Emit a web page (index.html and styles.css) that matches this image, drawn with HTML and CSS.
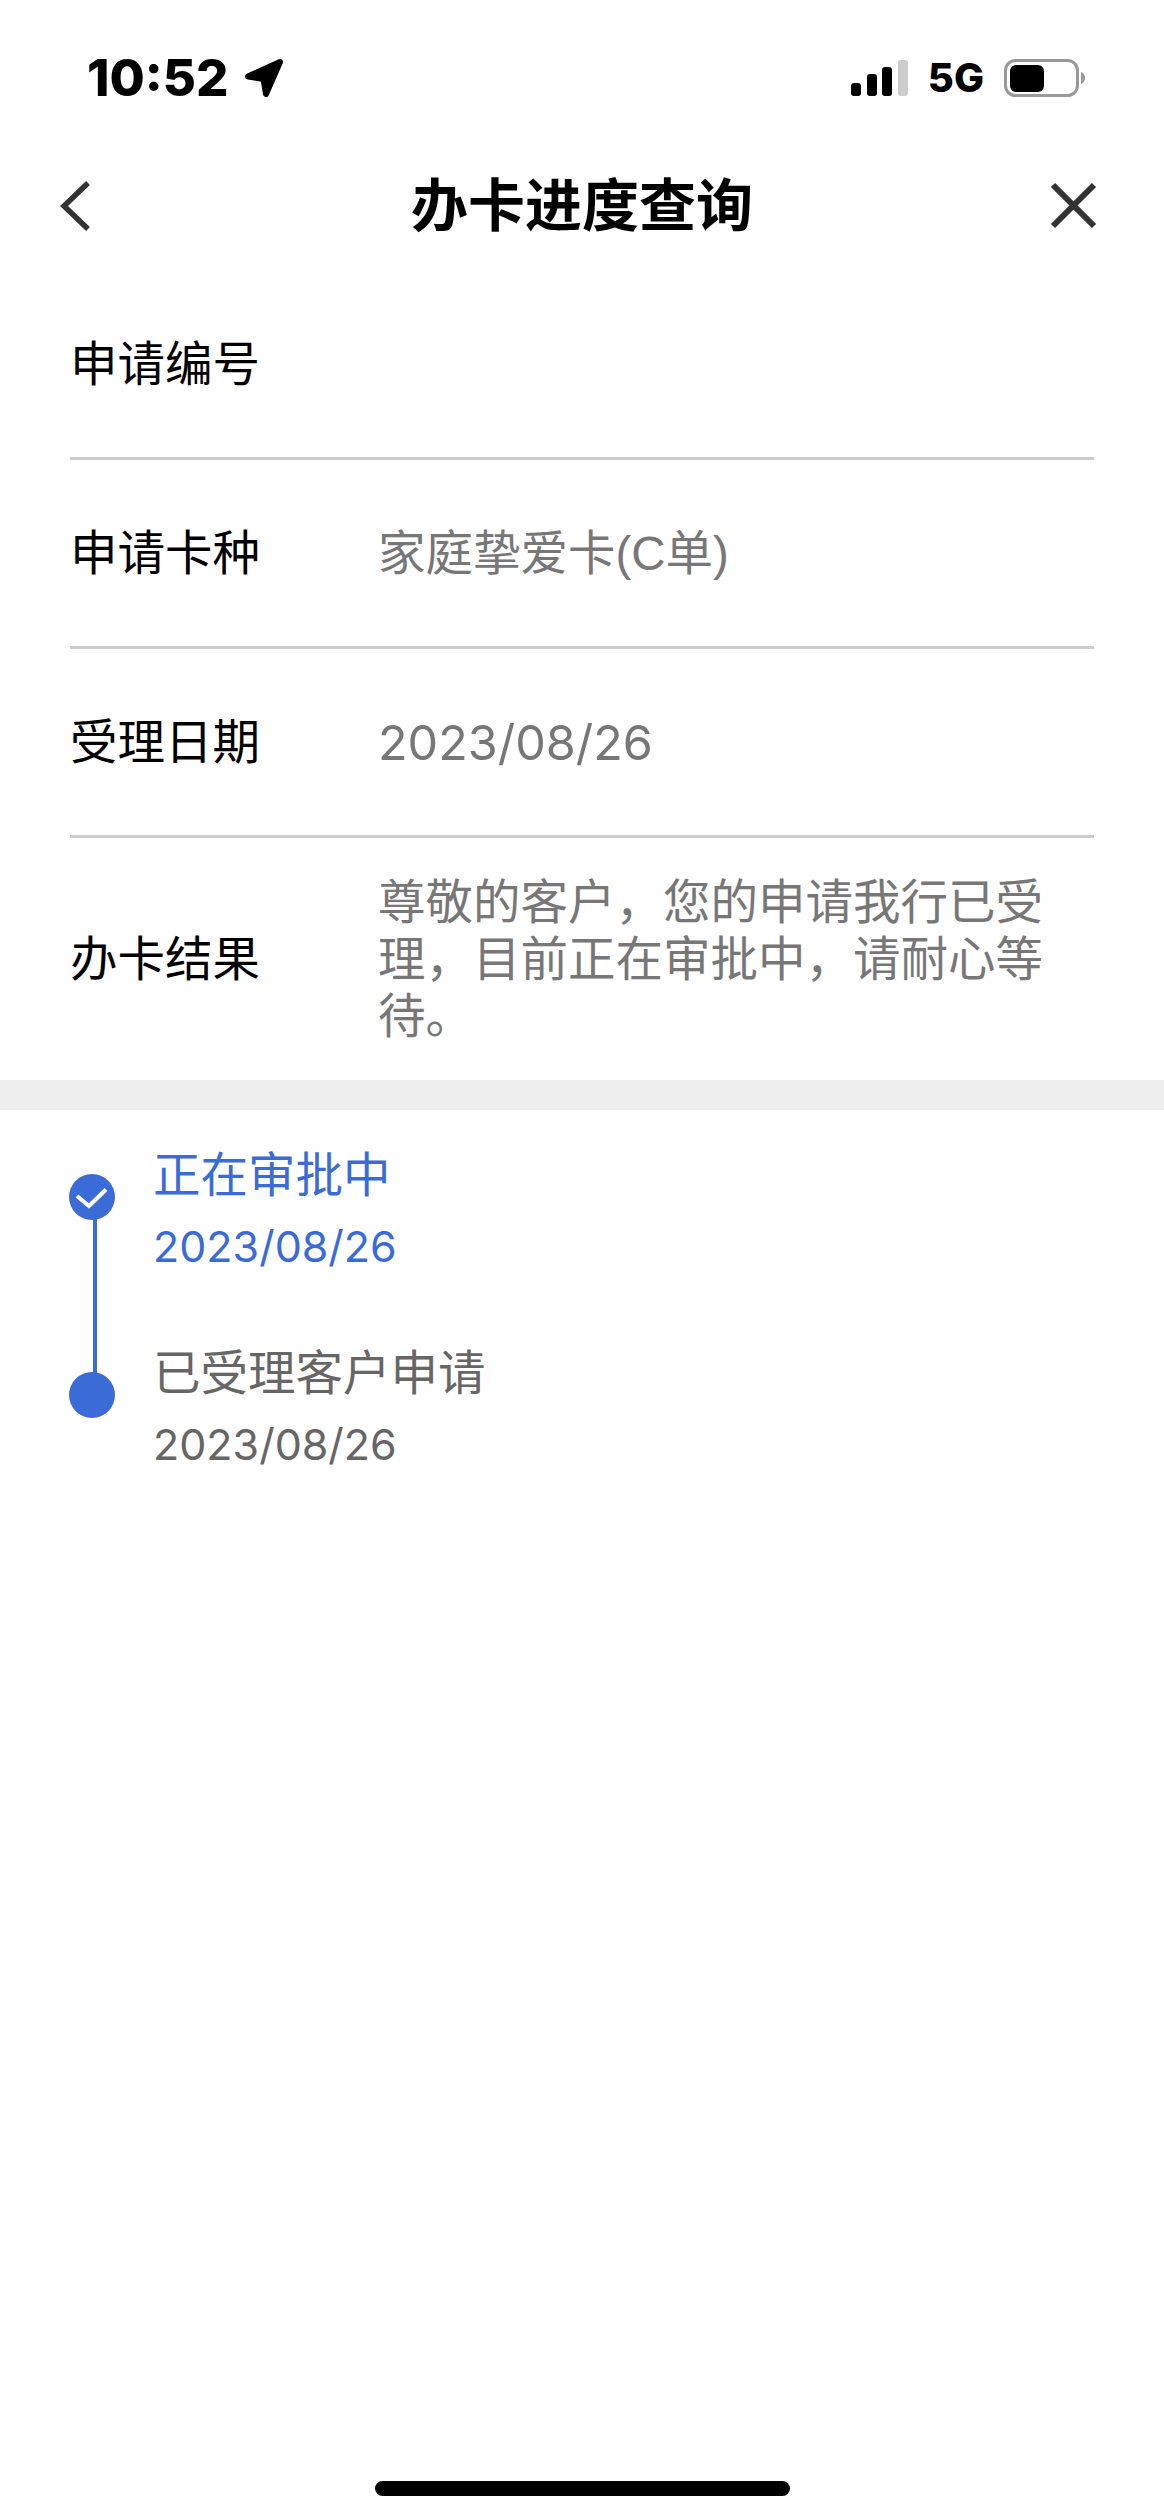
FILE: index.html
```html
<!DOCTYPE html>
<html lang="zh-CN">
<head>
    <meta charset="UTF-8">
    <title>办卡进度查询</title>
    <link rel="stylesheet" href="styles.css">
</head>
<body>
    <!-- Status bar -->
    <div class="status-bar">
        <div class="status-left">
            <span class="time">10:52</span>
            <svg class="location" width="40" height="40" viewBox="0 0 40 40"><path d="M4 18.500 36 4 22 36 19.500 21z" fill="#000" stroke="#000" stroke-width="6" stroke-linejoin="round"/></svg>
        </div>
        <div class="status-right">
            <svg class="signal" width="57" height="36" viewBox="0 0 57 36">
                <rect x="0" y="23" width="10" height="13" rx="3" fill="#000"/>
                <rect x="16" y="14" width="10" height="22" rx="3" fill="#000"/>
                <rect x="31" y="7" width="10" height="29" rx="3" fill="#000"/>
                <rect x="47" y="0" width="10" height="36" rx="3" fill="#ccc"/>
            </svg>
            <span class="network">5G</span>
            <svg class="battery" width="81" height="38" viewBox="0 0 81 38">
                <rect x="1.500" y="1.500" width="72" height="35" rx="10" fill="none" stroke="#999" stroke-width="3"/>
                <rect x="6" y="6" width="34" height="27" rx="6" fill="#000"/>
                <path d="M77 13c3 1 4 3.500 4 6s-1 5-4 6z" fill="#999"/>
            </svg>
        </div>
    </div>

    <!-- Nav -->
    <div class="nav-bar">
        <svg class="nav-back" width="40" height="56" viewBox="0 0 40 56"><path d="M28 5 4 28l24 23" fill="none" stroke="#333" stroke-width="5.500"/></svg>
        <div class="nav-title">办卡进度查询</div>
        <svg class="nav-close" width="56" height="56" viewBox="0 0 56 56"><path d="M5 7l41 41M46 7 5 48" fill="none" stroke="#333" stroke-width="6"/></svg>
    </div>

    <!-- Info rows -->
    <div class="info-list">
        <div class="info-row">
            <div class="info-label">申请编号</div>
            <div class="info-value"></div>
        </div>
        <div class="info-row">
            <div class="info-label">申请卡种</div>
            <div class="info-value">家庭挚爱卡(C单)</div>
        </div>
        <div class="info-row">
            <div class="info-label">受理日期</div>
            <div class="info-value info-date">2023/08/26</div>
        </div>
        <div class="info-row info-row-last">
            <div class="info-label">办卡结果</div>
            <div class="info-value">尊敬的客户，您的申请我行已受理，目前正在审批中，请耐心等待。</div>
        </div>
    </div>

    <div class="band"></div>

    <!-- Timeline -->
    <div class="timeline">
        <div class="step step-active">
            <div class="step-mark">
                <svg class="dot" width="46" height="46" viewBox="0 0 46 46"><circle cx="23" cy="23" r="23" fill="#3a6bd6"/><path d="M8 22 20 32 37 15.500" fill="none" stroke="#fff" stroke-width="4"/></svg>
            </div>
            <div class="step-body">
                <div class="step-title">正在审批中</div>
                <div class="step-date">2023/08/26</div>
            </div>
        </div>
        <div class="step">
            <div class="step-mark">
                <svg class="dot" width="46" height="46" viewBox="0 0 46 46"><circle cx="23" cy="23" r="23" fill="#3a6bd6"/></svg>
            </div>
            <div class="step-body">
                <div class="step-title">已受理客户申请</div>
                <div class="step-date">2023/08/26</div>
            </div>
        </div>
    </div>

    <div class="home-indicator"></div>
</body>
</html>
```

FILE: styles.css
```css
html, body {
    margin: 0;
    padding: 0;
}
body {
    width: 1164px;
    height: 2520px;
    background: #fff;
    overflow: hidden;
    display: flex;
    flex-direction: column;
    font-family: "Liberation Sans", "Noto Sans CJK SC", sans-serif;
    color: #000;
}
.status-bar {
    height: 108px;
    padding: 48px 79px 0 87px;
    box-sizing: border-box;
    display: flex;
    justify-content: space-between;
    align-items: center;
}
.status-left {
    display: flex;
    align-items: center;
    gap: 15px;
}
.time {
    font-family: Inter, sans-serif;
    font-size: 51px;
    font-weight: 800;
    line-height: 60px;
}
.status-right {
    display: flex;
    align-items: center;
    gap: 20px;
}
.network {
    font-family: Inter, sans-serif;
    font-size: 40px;
    font-weight: 800;
    line-height: 50px;
}
.nav-bar {
    height: 130px;
    padding: 0 60px;
    display: grid;
    grid-template-columns: 1fr auto 1fr;
    align-items: center;
    box-sizing: border-box;
    margin-top: 33px;
}
.nav-close {
    justify-self: end;
}
.nav-title {
    font-size: 57px;
    font-weight: 700;
    line-height: 64px;
}
.info-list {
    padding: 0 70px;
}
.info-row {
    display: flex;
    align-items: center;
    height: 189px;
    border-bottom: 3px solid #ccc;
    box-sizing: border-box;
}
.info-row-last {
    height: 242px;
    border-bottom: 0;
}
.info-label {
    width: 308px;
    flex: none;
    font-size: 47.500px;
    line-height: 57px;
}
.info-value {
    font-size: 47.500px;
    line-height: 57px;
    color: #777;
    width: 670px;
}
.info-date {
    font-family: Inter, sans-serif;
    font-size: 48.500px;
}
.band {
    height: 30px;
    background: #eee;
}
.timeline {
    padding: 36px 0 0 69px;
}
.step {
    display: flex;
    height: 198px;
}
.step-mark {
    width: 84px;
    flex: none;
    position: relative;
    padding-top: 28px;
}
.step-active .step-mark::after {
    content: "";
    position: absolute;
    left: 24px;
    top: 70px;
    width: 3.500px;
    height: 170px;
    background: #3a6bd6;
}
.dot {
    display: block;
    position: relative;
    z-index: 1;
}
.step-title {
    font-size: 47.500px;
    line-height: 56px;
    color: #666;
    padding-top: 2px;
}
.step-date {
    font-family: Inter, sans-serif;
    font-size: 43px;
    line-height: 50px;
    color: #666;
    margin-top: 17px;
}
.step-active .step-title,
.step-active .step-date {
    color: #3a6bd6;
}
.home-indicator {
    width: 415px;
    height: 15px;
    border-radius: 8px;
    background: #000;
    margin: auto auto 24px;
}
```
